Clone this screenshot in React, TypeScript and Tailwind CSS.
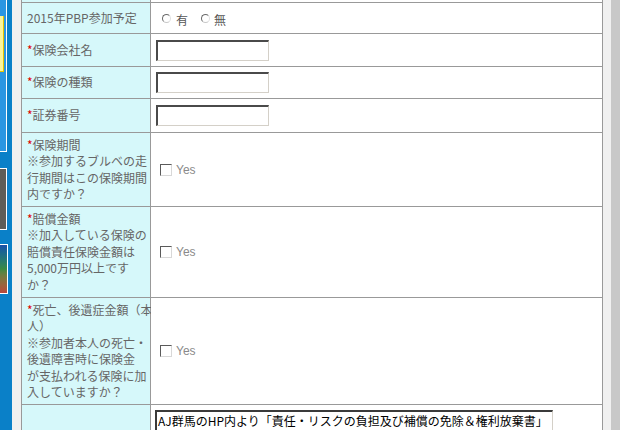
import React from "react";

const Req = () => <span className="text-[#e00000]">*</span>;

const Box = () => (
  <span className="inline-block w-[12px] h-[12px] bg-white border-t border-l border-t-[#5a5a5a] border-l-[#5a5a5a] border-r border-b border-r-[#d8d8d8] border-b-[#d8d8d8]" />
);

const Radio = () => (
  <span className="inline-block w-[9px] h-[9px] rounded-full bg-white border border-t-[#6a6a6a] border-l-[#6a6a6a] border-r-[#e0e0e0] border-b-[#c8c8c8]" />
);

const TextBox = () => (
  <div className="w-[113px] h-[21px] bg-white border-t-2 border-l-2 border-t-[#4a4a4a] border-l-[#4a4a4a] border-r border-b border-r-[#d4d0c8] border-b-[#d4d0c8]" />
);

function Row({
  h,
  left,
  right,
  last,
}: {
  h: string;
  left?: React.ReactNode;
  right?: React.ReactNode;
  last?: boolean;
}) {
  return (
    <div className={`flex shrink-0 ${last ? "flex-1" : "border-b border-[#999999]"} ${h}`}>
      <div className="w-[129px] shrink-0 border-r border-[#999999] bg-[#d6f8fa] pl-[5px] flex items-center text-[12px] leading-[16.5px] text-[#666666] whitespace-nowrap">
        <div>{left}</div>
      </div>
      <div className="flex-1 bg-white pl-[5px] flex items-center">{right}</div>
    </div>
  );
}

const YesCell = () => (
  <div className="flex items-center ml-[4px] gap-[4px]">
    <Box />
    <span className="text-[12px] text-[#8a8a8a] font-['Liberation_Sans',sans-serif]">Yes</span>
  </div>
);

export default function App() {
  return (
    <div className="flex w-[640px] h-[430px] overflow-hidden bg-white font-['Noto_Sans_CJK_JP','Liberation_Sans',sans-serif]">
      {/* sidebar edge */}
      <div className="w-[12px] h-full shrink-0 bg-[#0a80c8] flex flex-col">
        <div className="w-[7px] h-[152px] bg-[#2a96e2] border-r border-b border-white flex flex-col">
          <div className="mt-[16px] w-[4px] h-[56px] bg-[#fbf59a] border-r border-b border-[#e7c400]" />
        </div>
        <div className="mt-[16px] w-[7px] h-[62px] bg-[#5e5d58] border-r border-t border-b border-white" />
        <div className="mt-[14px] w-[8px] h-[50px] bg-gradient-to-b from-[#1d4fa8] via-[#3a8a42] to-[#b8463c] border-r border-t border-b border-white" />
      </div>
      <div className="w-[9px] h-full shrink-0 bg-[#f0f0f0]" />

      {/* form table */}
      <div className="w-[582px] h-full shrink-0 flex flex-col border-l border-r border-[#999999]">
        <Row h="h-[3px]" />
        <Row
          h="h-[31px]"
          left={<>2015年PBP参加予定</>}
          right={
            <div className="flex items-center text-[12px] text-[#555555] ml-[6px]">
              <Radio />
              <span className="ml-[5px] mt-[3px]">有</span>
              <span className="ml-[13px]"><Radio /></span>
              <span className="ml-[4px] mt-[3px]">無</span>
            </div>
          }
        />
        <Row h="h-[33px]" left={<><Req />保険会社名</>} right={<TextBox />} />
        <Row h="h-[32px]" left={<><Req />保険の種類</>} right={<TextBox />} />
        <Row h="h-[34px]" left={<><Req />証券番号</>} right={<TextBox />} />
        <Row
          h="h-[74px]"
          left={
            <>
              <Req />保険期間<br />
              ※参加するブルベの走<br />
              行期間はこの保険期間<br />
              内ですか？
            </>
          }
          right={<YesCell />}
        />
        <Row
          h="h-[91px]"
          left={
            <>
              <Req />賠償金額<br />
              ※加入している保険の<br />
              賠償責任保険金額は<br />
              5,000万円以上です<br />
              か？
            </>
          }
          right={<YesCell />}
        />
        <Row
          h="h-[107px]"
          left={
            <>
              <Req />死亡、後遺症金額（本<br />
              人）<br />
              ※参加者本人の死亡・<br />
              後遺障害時に保険金<br />
              が支払われる保険に加<br />
              入していますか？
            </>
          }
          right={<YesCell />}
        />
        <div className="flex flex-1">
          <div className="w-[129px] shrink-0 border-r border-[#999999] bg-[#d6f8fa]" />
          <div className="flex-1 bg-white pl-[4px] pt-[5px]">
            <div className="w-[398px] h-[40px] bg-white border-t-2 border-l-2 border-t-[#3a3a3a] border-l-[#3a3a3a] border-r border-b border-r-[#d4d0c8] border-b-[#d4d0c8] pl-[1px] pt-[1px] text-[12px] leading-[15px] text-black whitespace-nowrap overflow-hidden">
              <div>AJ群馬のHP内より「責任・リスクの負担及び補償の免除＆権利放棄書」</div>
              <div>を印刷し、必要事項を記入の上当日持参してください。</div>
            </div>
          </div>
        </div>
      </div>

      <div className="w-[8px] h-full shrink-0 bg-[#f0f0f0]" />
      <div className="w-[9px] h-full shrink-0 bg-[#c8c8c8]" />
      <div className="flex-1 h-full bg-white" />
    </div>
  );
}
